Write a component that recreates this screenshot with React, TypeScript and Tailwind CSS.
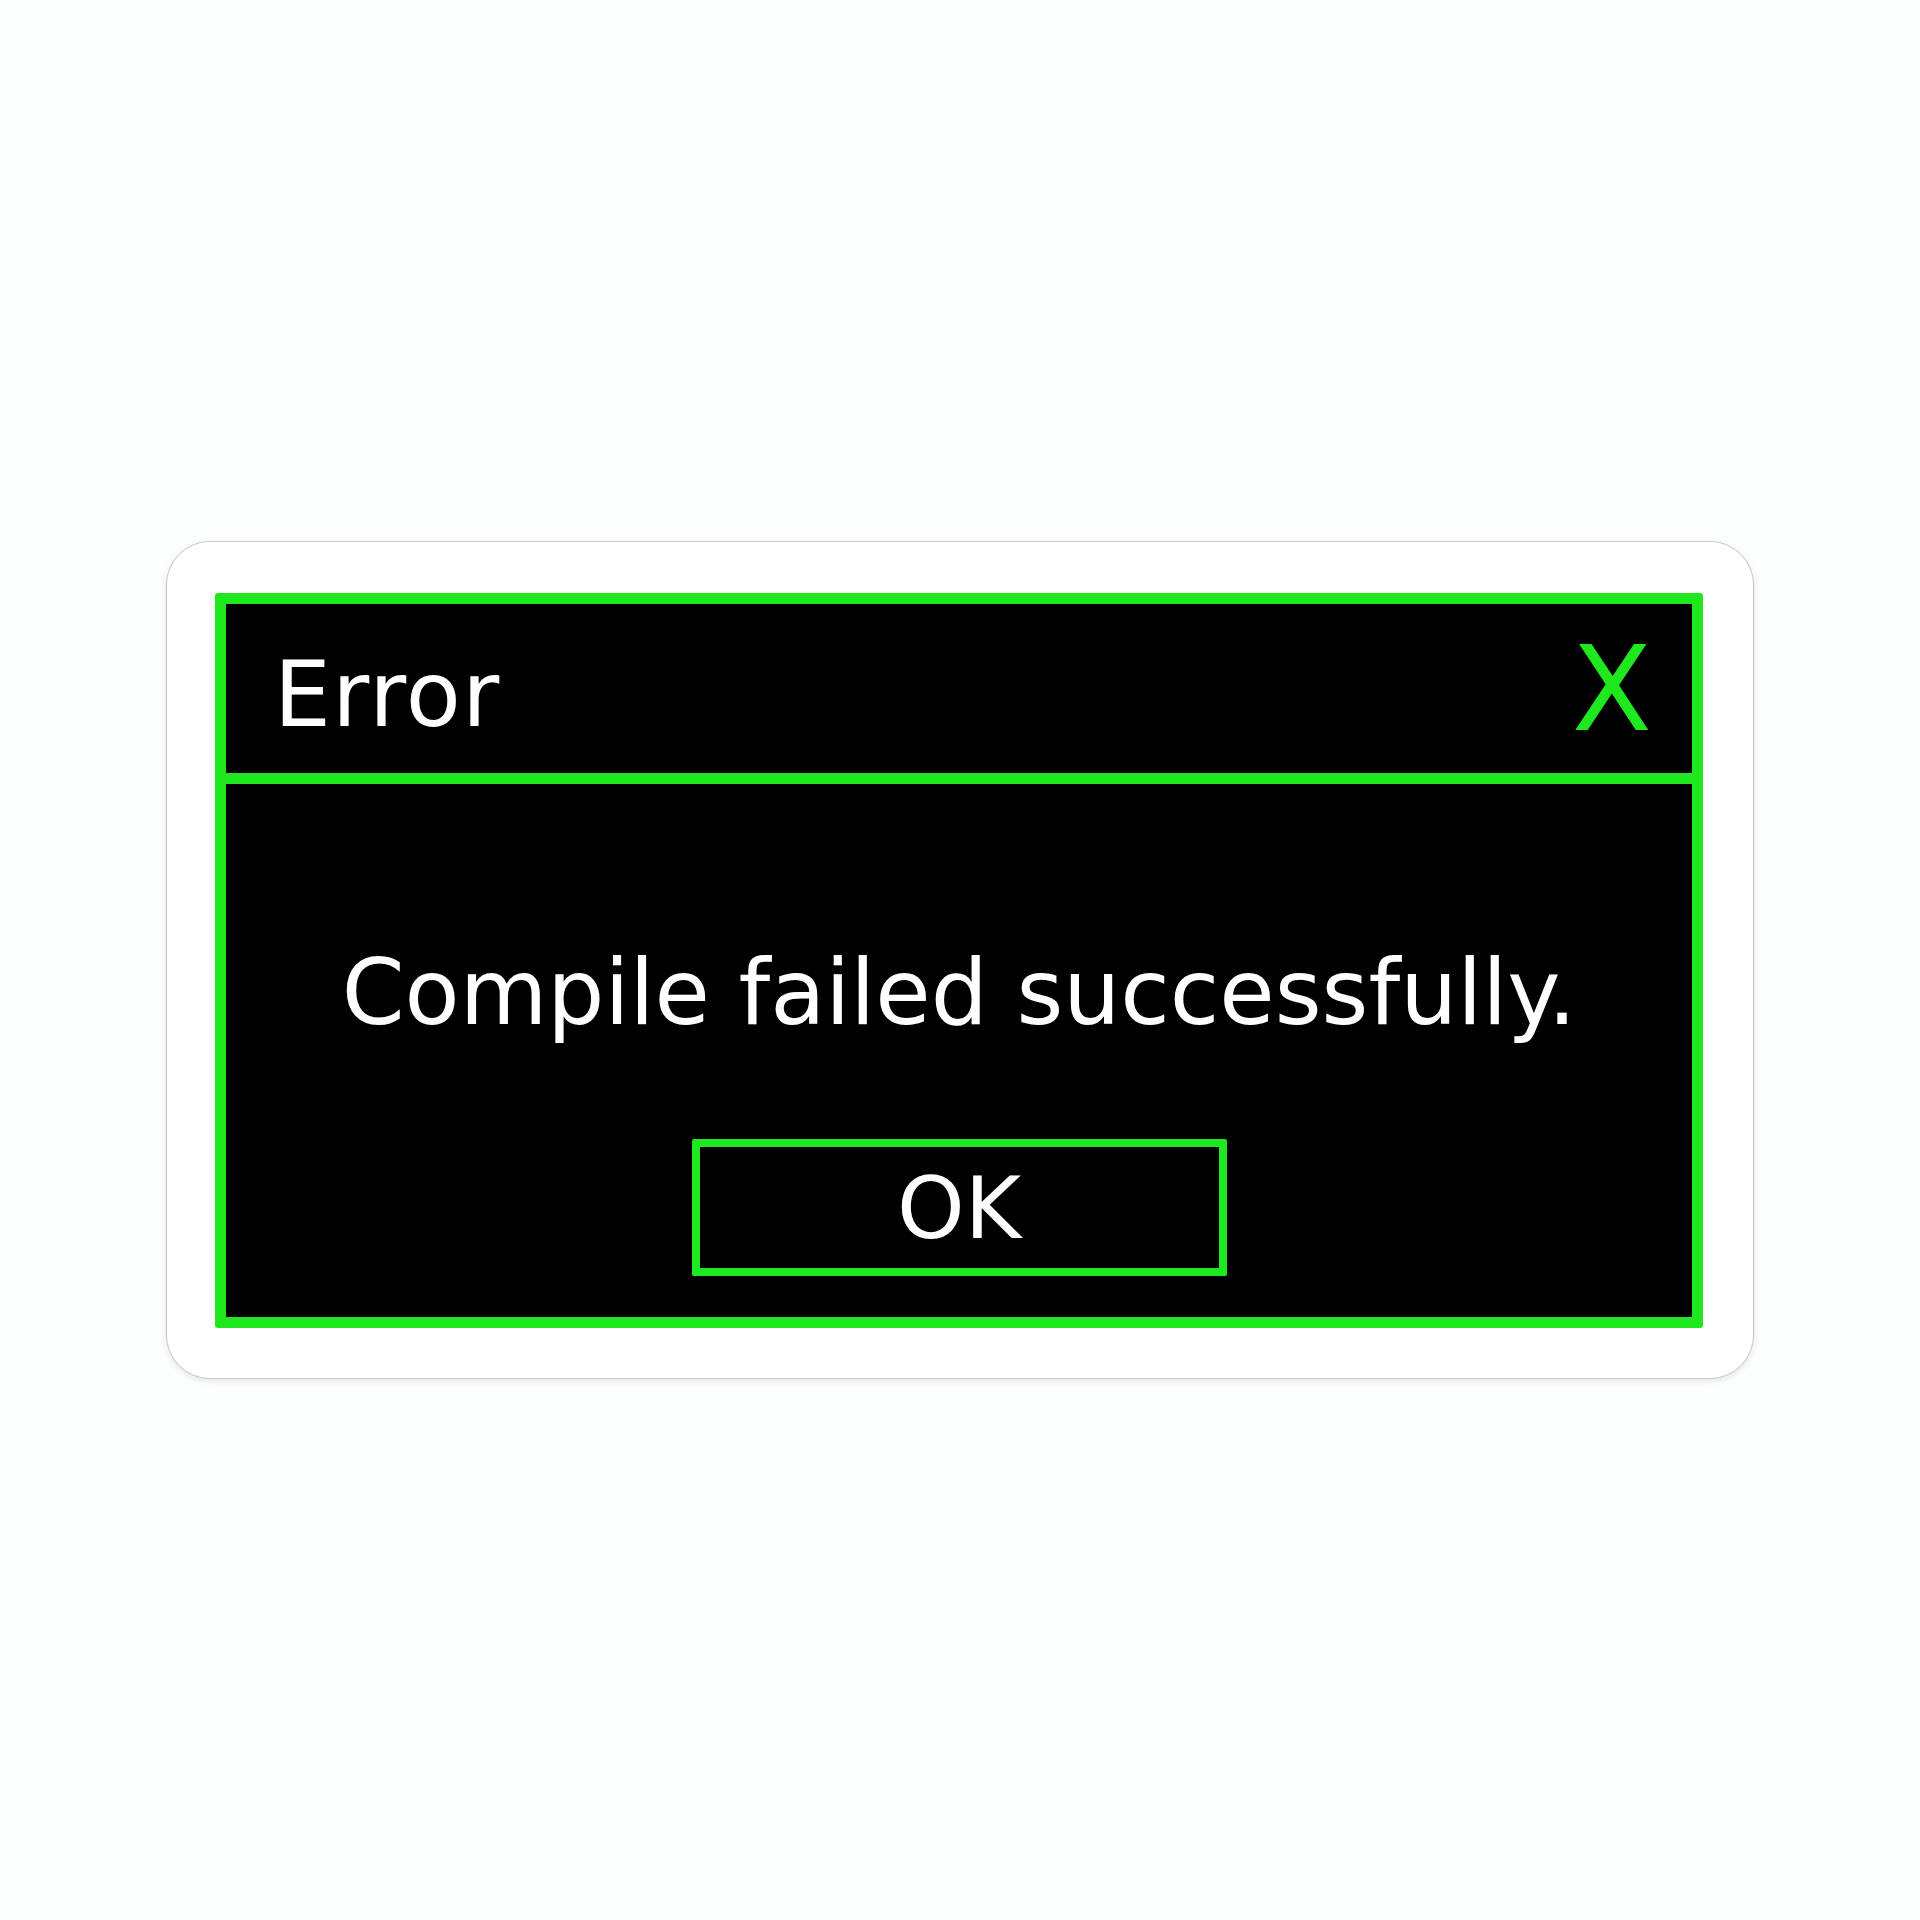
const green = "border-[#20e81e]";

function TitleBar() {
  return (
    <div className={`flex h-[169px] items-start justify-between border-b-[11px] ${green} box-content pl-[48px] pr-[40px]`}>
      <span className="mt-[46px] text-[90px] leading-none tracking-[1.5px] text-white">Error</span>
      <span className="mt-[27px] text-[117px] leading-none text-[#20e81e]">X</span>
    </div>
  );
}

function OkButton() {
  return (
    <button
      type="button"
      className={`flex h-[137px] w-[535px] items-center justify-center rounded-[2px] border-[8px] ${green} bg-black text-[86px] leading-none text-white`}
    >
      OK
    </button>
  );
}

export default function App() {
  return (
    <div
      className="flex h-screen w-full items-center justify-center bg-[#fcfdfd]"
      style={{ fontFamily: '"DejaVu Sans", Verdana, sans-serif' }}
    >
      {/* sticker card */}
      <div className="w-[1588px] rounded-[44px] border border-[#c8c8c8] bg-white pt-[51px] pb-[50px] pl-[48px] pr-[50px] shadow-[0_2px_6px_rgba(0,0,0,0.10)]">
        <div className={`w-[1488px] rounded-[3px] border-[11px] ${green} bg-black`}>
          <TitleBar />
          <div className="flex h-[533px] flex-col items-center pt-[164px]">
            <p className="h-[90px] text-[90px] leading-none text-white">Compile failed successfully.</p>
            <div className="mt-[101px]">
              <OkButton />
            </div>
          </div>
        </div>
      </div>
    </div>
  );
}
